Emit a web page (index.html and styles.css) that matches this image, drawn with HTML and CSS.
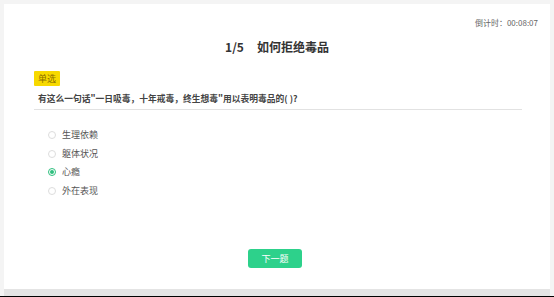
FILE: index.html
```html
<!DOCTYPE html>
<html lang="zh">
<head>
<meta charset="utf-8">
<link rel="stylesheet" href="styles.css">
</head>
<body>
<div class="page">
  <div class="card">
    <div class="timer">倒计时：00:08:07</div>
    <h1 class="title"><span class="num">1/5</span><span>如何拒绝毒品</span></h1>
    <div class="question">
      <span class="badge">单选</span>
      <p class="qtext">有这么一句话"一日吸毒，十年戒毒，终生想毒"用以表明毒品的( )?</p>
    </div>
    <ul class="options">
      <li class="opt"><span class="radio"></span>生理依赖</li>
      <li class="opt"><span class="radio"></span>躯体状况</li>
      <li class="opt"><span class="radio checked"></span>心瘾</li>
      <li class="opt"><span class="radio"></span>外在表现</li>
    </ul>
    <div class="actions"><button class="next">下一题</button></div>
  </div>
  <div class="bottom"></div>
</div>
</body>
</html>
```

FILE: styles.css
```css
* { box-sizing: border-box; }
html, body { margin: 0; padding: 0; }
body {
  background: #f4f4f4;
  font-family: "Noto Sans CJK SC", "Noto Sans", sans-serif;
  color: #333;
  width: 554px;
  height: 297px;
  overflow: hidden;
  border-bottom: 1px solid #000;
}
.page {
  padding: 4px 4px 0 4px;
  display: flex;
  flex-direction: column;
}
.card {
  background: #fff;
  height: 285px;
  padding: 14px 12px 0 30px;
  display: flex;
  flex-direction: column;
}
.timer {
  align-self: flex-end;
  font-size: 8px;
  line-height: 10px;
  color: #666;
}
.title {
  margin: 11px 0 0 -18px;
  font-size: 12px;
  line-height: 16px;
  font-weight: bold;
  color: #333;
  display: flex;
  justify-content: center;
  gap: 13px;
}
.question {
  margin-top: 16px;
  margin-right: 16px;
  display: flex;
  flex-direction: column;
  align-items: flex-start;
  border-bottom: 1px solid #e2e2e2;
}
.badge {
  background: #f7d900;
  color: #8a6d00;
  font-size: 9px;
  line-height: 15px;
  padding: 0 4px;
  border-radius: 1px;
}
.qtext {
  margin: 3px 0 0 4px;
  font-size: 8.75px;
  line-height: 20px;
  font-weight: bold;
  color: #444;
}
.options {
  list-style: none;
  margin: 18px 0 0 0;
  padding: 0 0 0 14px;
  display: flex;
  flex-direction: column;
  gap: 4px;
}
.opt {
  display: flex;
  align-items: center;
  gap: 6px;
  font-size: 9px;
  line-height: 14.5px;
  color: #555;
}
.radio {
  width: 8px;
  height: 8px;
  border: 1px solid #ddd;
  border-radius: 50%;
  display: flex;
  align-items: center;
  justify-content: center;
}
.radio.checked { border-color: #2ebf7e; }
.radio.checked::after {
  content: "";
  width: 4px;
  height: 4px;
  border-radius: 50%;
  background: #2ebf7e;
}
.actions {
  margin-top: 51px;
  margin-left: -22px;
  display: flex;
  justify-content: center;
}
.next {
  width: 54px;
  height: 19px;
  border: 0;
  border-radius: 3px;
  background: #2dd18b;
  color: #fff;
  font-family: inherit;
  font-size: 9px;
  padding: 0;
}
.bottom {
  height: 7px;
  background: #e4e4e4;
}
```
